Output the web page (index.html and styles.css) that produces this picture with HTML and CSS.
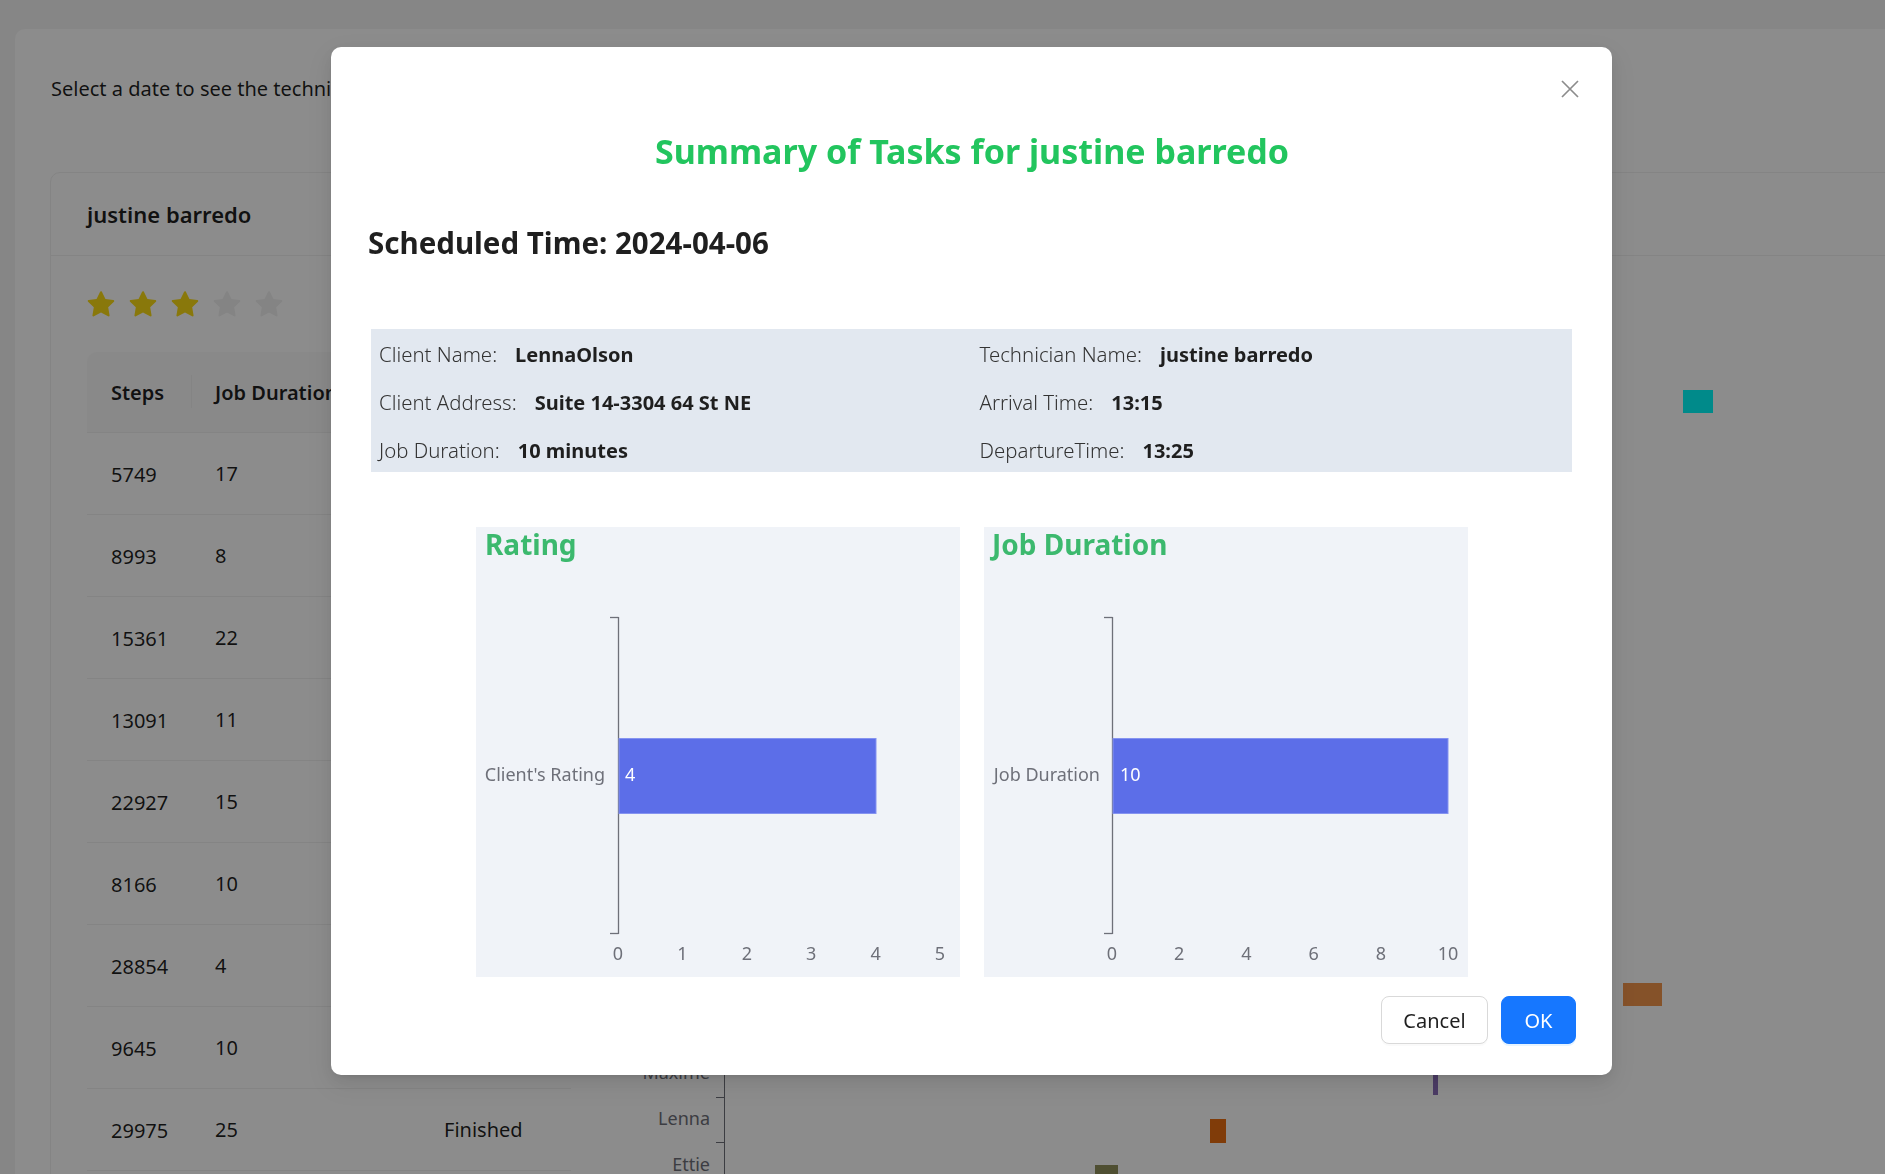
FILE: index.html
```html
<!DOCTYPE html>
<html lang="en">
<head>
<meta charset="utf-8">
<title>Technician Tasks</title>
<link rel="stylesheet" href="styles.css">
</head>
<body>
<div class="page">
  <div class="main-card">
    <p class="intro">Select a date to see the technician's tasks and performance.</p>
    <section class="tech-card">
      <header class="tech-head">justine barredo</header>
      <div class="tech-body">
        <div class="tech-left">
          <div class="stars">
            <svg class="star on" viewBox="64 64 896 896"><path d="M908.1 353.1l-253.9-36.9L540.7 86.1c-3.1-6.3-8.2-11.4-14.5-14.5-15.8-7.8-35-1.3-42.9 14.5L369.8 316.2l-253.9 36.9c-7 1-13.4 4.3-18.3 9.3a32.05 32.05 0 00.6 45.3l183.7 179.1-43.4 252.9a31.95 31.95 0 0046.4 33.7L512 754l227.1 119.4c6.2 3.3 13.4 4.4 20.3 3.2 17.4-3 29.1-19.5 26.1-36.9l-43.4-252.9 183.7-179.1c5-4.9 8.3-11.3 9.3-18.3 2.7-17.5-9.5-33.7-27-36.3z"/></svg>
            <svg class="star on" viewBox="64 64 896 896"><path d="M908.1 353.1l-253.9-36.9L540.7 86.1c-3.1-6.3-8.2-11.4-14.5-14.5-15.8-7.8-35-1.3-42.9 14.5L369.8 316.2l-253.9 36.9c-7 1-13.4 4.3-18.3 9.3a32.05 32.05 0 00.6 45.3l183.7 179.1-43.4 252.9a31.95 31.95 0 0046.4 33.7L512 754l227.1 119.4c6.2 3.3 13.4 4.4 20.3 3.2 17.4-3 29.1-19.5 26.1-36.9l-43.4-252.9 183.7-179.1c5-4.9 8.3-11.3 9.3-18.3 2.7-17.5-9.5-33.7-27-36.3z"/></svg>
            <svg class="star on" viewBox="64 64 896 896"><path d="M908.1 353.1l-253.9-36.9L540.7 86.1c-3.1-6.3-8.2-11.4-14.5-14.5-15.8-7.8-35-1.3-42.9 14.5L369.8 316.2l-253.9 36.9c-7 1-13.4 4.3-18.3 9.3a32.05 32.05 0 00.6 45.3l183.7 179.1-43.4 252.9a31.95 31.95 0 0046.4 33.7L512 754l227.1 119.4c6.2 3.3 13.4 4.4 20.3 3.2 17.4-3 29.1-19.5 26.1-36.9l-43.4-252.9 183.7-179.1c5-4.9 8.3-11.3 9.3-18.3 2.7-17.5-9.5-33.7-27-36.3z"/></svg>
            <svg class="star off" viewBox="64 64 896 896"><path d="M908.1 353.1l-253.9-36.9L540.7 86.1c-3.1-6.3-8.2-11.4-14.5-14.5-15.8-7.8-35-1.3-42.9 14.5L369.8 316.2l-253.9 36.9c-7 1-13.4 4.3-18.3 9.3a32.05 32.05 0 00.6 45.3l183.7 179.1-43.4 252.9a31.95 31.95 0 0046.4 33.7L512 754l227.1 119.4c6.2 3.3 13.4 4.4 20.3 3.2 17.4-3 29.1-19.5 26.1-36.9l-43.4-252.9 183.7-179.1c5-4.9 8.3-11.3 9.3-18.3 2.7-17.5-9.5-33.7-27-36.3z"/></svg>
            <svg class="star off" viewBox="64 64 896 896"><path d="M908.1 353.1l-253.9-36.9L540.7 86.1c-3.1-6.3-8.2-11.4-14.5-14.5-15.8-7.8-35-1.3-42.9 14.5L369.8 316.2l-253.9 36.9c-7 1-13.4 4.3-18.3 9.3a32.05 32.05 0 00.6 45.3l183.7 179.1-43.4 252.9a31.95 31.95 0 0046.4 33.7L512 754l227.1 119.4c6.2 3.3 13.4 4.4 20.3 3.2 17.4-3 29.1-19.5 26.1-36.9l-43.4-252.9 183.7-179.1c5-4.9 8.3-11.3 9.3-18.3 2.7-17.5-9.5-33.7-27-36.3z"/></svg>
          </div>
          <table class="steps-table">
            <colgroup><col class="w1"><col class="w2"><col class="w3"></colgroup>
            <thead>
              <tr><th class="c1">Steps</th><th class="c2">Job Duration</th><th class="c3"></th></tr>
            </thead>
            <tbody>
              <tr><td>5749</td><td>17</td><td></td></tr>
              <tr><td>8993</td><td>8</td><td></td></tr>
              <tr><td>15361</td><td>22</td><td></td></tr>
              <tr><td>13091</td><td>11</td><td></td></tr>
              <tr><td>22927</td><td>15</td><td></td></tr>
              <tr><td>8166</td><td>10</td><td></td></tr>
              <tr><td>28854</td><td>4</td><td></td></tr>
              <tr><td>9645</td><td>10</td><td></td></tr>
              <tr><td>29975</td><td>25</td><td>Finished</td></tr>
            </tbody>
          </table>
        </div>
        <div class="tech-chart">
          <div class="axis-v"></div>
          <div class="tick" style="top:749px"></div>
          <div class="tick" style="top:795px"></div>
          <div class="tick" style="top:841px"></div>
          <div class="tick" style="top:886px"></div>
          <div class="tick" style="top:932px"></div>
          <span class="cat" style="top:816px">Maxime</span>
          <span class="cat" style="top:862px">Lenna</span>
          <span class="cat" style="top:908px">Ettie</span>
          <div class="mark teal" style="left:1112px;top:134px;width:30px;height:23px"></div>
          <div class="mark orange" style="left:1052px;top:727px;width:39px;height:23px"></div>
          <div class="mark purple" style="left:862px;top:800px;width:5px;height:39px"></div>
          <div class="mark rust" style="left:639px;top:863px;width:16px;height:24px"></div>
          <div class="mark olive" style="left:524px;top:909px;width:23px;height:24px"></div>
        </div>
      </div>
    </section>
  </div>
</div>

<div class="mask"></div>

<div class="modal" role="dialog" aria-labelledby="modal-title">
  <button class="close" aria-label="Close">
    <svg viewBox="0 0 18 18" width="18" height="18"><path d="M1 1L17 17M17 1L1 17"/></svg>
  </button>
  <h2 class="modal-title" id="modal-title">Summary of Tasks for justine barredo</h2>
  <h3 class="sched">Scheduled Time: 2024-04-06</h3>
  <div class="info">
    <div><span class="lbl">Client Name:</span><span class="val">LennaOlson</span></div>
    <div><span class="lbl">Technician Name:</span><span class="val">justine barredo</span></div>
    <div><span class="lbl">Client Address:</span><span class="val">Suite 14-3304 64 St NE</span></div>
    <div><span class="lbl">Arrival Time:</span><span class="val">13:15</span></div>
    <div><span class="lbl">Job Duration:</span><span class="val">10 minutes</span></div>
    <div><span class="lbl">DepartureTime:</span><span class="val">13:25</span></div>
  </div>
  <div class="charts">
    <div class="panel">
      <div class="c-title rating-title">Rating</div>
      <svg class="chart" width="484" height="416" viewBox="0 34 484 416">
        <line class="axis" x1="142.5" y1="90" x2="142.5" y2="407"/>
        <line class="axis" x1="134" y1="90.5" x2="142.5" y2="90.5"/>
        <line class="axis" x1="134" y1="406.5" x2="142.5" y2="406.5"/>
        <rect class="bar" x="143" y="211.5" width="257" height="75"/>
        <text class="bar-label" x="149" y="247">4</text>
        <text class="cat-label" x="129" y="247">Client's Rating</text>
        <text class="x-label" x="142" y="426">0</text>
        <text class="x-label" x="206.4" y="426">1</text>
        <text class="x-label" x="270.8" y="426">2</text>
        <text class="x-label" x="335.2" y="426">3</text>
        <text class="x-label" x="399.6" y="426">4</text>
        <text class="x-label" x="464" y="426">5</text>
      </svg>
    </div>
    <div class="panel">
      <div class="c-title duration-title">Job Duration</div>
      <svg class="chart" width="484" height="416" viewBox="0 34 484 416">
        <line class="axis" x1="128.5" y1="90" x2="128.5" y2="407"/>
        <line class="axis" x1="120" y1="90.5" x2="128.5" y2="90.5"/>
        <line class="axis" x1="120" y1="406.5" x2="128.5" y2="406.5"/>
        <rect class="bar" x="129" y="211.5" width="335" height="75"/>
        <text class="bar-label" x="136" y="247">10</text>
        <text class="cat-label" x="116" y="247">Job Duration</text>
        <text class="x-label" x="128" y="426">0</text>
        <text class="x-label" x="195.2" y="426">2</text>
        <text class="x-label" x="262.4" y="426">4</text>
        <text class="x-label" x="329.6" y="426">6</text>
        <text class="x-label" x="396.8" y="426">8</text>
        <text class="x-label" x="464" y="426">10</text>
      </svg>
    </div>
  </div>
  <div class="footer">
    <button class="btn btn-cancel">Cancel</button>
    <button class="btn btn-ok">OK</button>
  </div>
</div>
</body>
</html>
```

FILE: styles.css
```css
* { box-sizing: border-box; }

html, body {
  margin: 0;
  height: 100%;
  overflow: hidden;
}

body {
  background: #f5f5f5;
  font-family: "Noto Sans", "Open Sans", sans-serif;
  color: rgba(0, 0, 0, 0.88);
}

/* ---------- background page ---------- */
.page {
  padding: 29px 0 0 15px;
}

.main-card {
  width: 2000px;
  height: 1300px;
  background: #fff;
  border-radius: 10px;
  padding: 45px 0 0 35px;
}

.intro {
  margin: 0 0 0 1px;
  font-size: 20px;
  line-height: 30px;
}

.tech-card {
  margin-top: 68px;
  width: 1900px;
  height: 1200px;
  border: 1px solid #f0f0f0;
  border-radius: 10px;
  background: #fff;
}

.tech-head {
  height: 83px;
  border-bottom: 1px solid #f0f0f0;
  padding-left: 36px;
  display: flex;
  align-items: center;
  font-size: 22px;
  font-weight: 600;
}

.tech-body {
  display: flex;
}

.tech-left {
  flex: none;
  width: 520px;
  padding: 35px 0 0 36px;
}

.stars {
  display: flex;
  gap: 14px;
  height: 28px;
}

.star {
  width: 28px;
  height: 28px;
}

.star.on { fill: #fadb14; }
.star.off { fill: #f0f0f0; }

.steps-table {
  margin-top: 33px;
  width: 484px;
  table-layout: fixed;
  border-collapse: separate;
  border-spacing: 0;
  font-size: 20px;
}

.steps-table .w1 { width: 104px; }
.steps-table .w2 { width: 229px; }
.steps-table .w3 { width: 151px; }

.steps-table th {
  height: 81px;
  padding: 0 24px;
  background: #fafafa;
  text-align: left;
  font-weight: 600;
  border-bottom: 1px solid #f0f0f0;
  position: relative;
}

.steps-table th.c1 { border-top-left-radius: 10px; }

.steps-table th.c2::before {
  content: "";
  position: absolute;
  left: 0;
  top: 23px;
  width: 1px;
  height: 33px;
  background: #f0f0f0;
}

.steps-table td {
  height: 82px;
  padding: 0 24px;
  border-bottom: 1px solid #f0f0f0;
}

.steps-table td:first-child { padding-top: 2px; }

.tech-chart {
  position: relative;
  flex: none;
  width: 1300px;
  height: 1000px;
}

.axis-v {
  position: absolute;
  left: 153px;
  top: 100px;
  width: 1px;
  height: 1000px;
  background: #6e7079;
}

.tick {
  position: absolute;
  left: 145px;
  width: 8px;
  height: 1px;
  background: #6e7079;
}

.cat {
  position: absolute;
  right: calc(100% - 139px);
  transform: translateY(-50%);
  font-size: 18px;
  color: #6e7079;
  white-space: nowrap;
}

.mark { position: absolute; }
.mark.teal { background: #00fcfc; }
.mark.orange { background: #f2954b; }
.mark.purple { background: #8a6db8; }
.mark.rust { background: #e96d12; }
.mark.olive { background: #91915b; }

/* ---------- modal ---------- */
.mask {
  position: fixed;
  inset: 0;
  background: rgba(0, 0, 0, 0.45);
}

.modal {
  position: fixed;
  top: 47px;
  left: 331px;
  width: 1281px;
  background: #fff;
  border-radius: 10px;
  padding: 81px 36px 31px 37px;
  box-shadow: 0 6px 16px 0 rgba(0, 0, 0, 0.08),
              0 3px 6px -4px rgba(0, 0, 0, 0.12),
              0 9px 28px 8px rgba(0, 0, 0, 0.05);
}

.close {
  position: absolute;
  top: 33px;
  right: 33px;
  width: 18px;
  height: 18px;
  padding: 0;
  border: 0;
  background: transparent;
}

.close svg {
  display: block;
  stroke: #8c8c8c;
  stroke-width: 1.7;
  fill: none;
}

.modal-title {
  margin: 0;
  text-align: center;
  font-size: 34px;
  line-height: 46px;
  font-weight: 700;
  color: #22c55e;
}

.sched {
  margin: 51px 0 0;
  font-size: 29.5px;
  line-height: 36px;
  font-weight: 700;
  color: #1f1f1f;
}

.info {
  margin: 68px 4px 0 3px;
  height: 143px;
  padding: 1px 8px 0;
  background: #e2e8f0;
  display: grid;
  grid-template-columns: 1fr 1fr;
  grid-template-rows: 48px 48px 48px;
  column-gap: 16px;
  align-items: center;
  font-size: 19.5px;
  color: #1f1f1f;
}

.info .lbl {
  font-size: 20.4px;
  font-weight: 300;
  color: #333;
  margin-right: 18px;
}

.info .val {
  font-size: 20px;
  font-weight: 700;
}

.charts {
  margin-top: 55px;
  display: flex;
  justify-content: center;
  gap: 24px;
}

.panel {
  width: 484px;
  height: 450px;
  background: #f0f3f8;
}

.c-title {
  height: 34px;
  font-size: 28px;
  line-height: 34px;
  font-weight: 700;
  color: #3cb96e;
  white-space: nowrap;
}

.rating-title { padding-left: 9px; }
.duration-title { padding-left: 8px; }

.chart {
  display: block;
  font-family: "Noto Sans", "Open Sans", sans-serif;
}

.axis {
  stroke: #6e7079;
  stroke-width: 1.3;
}

.bar {
  fill: #5c6ee8;
  stroke: #8593f0;
  stroke-width: 1;
}

.bar-label {
  font-size: 18px;
  fill: #fff;
  dominant-baseline: central;
}

.cat-label {
  font-size: 18px;
  fill: #6e7079;
  text-anchor: end;
  dominant-baseline: central;
}

.x-label {
  font-size: 18px;
  fill: #6e7079;
  text-anchor: middle;
  dominant-baseline: central;
}

.footer {
  margin-top: 19px;
  display: flex;
  justify-content: flex-end;
  gap: 13px;
}

.btn {
  height: 48px;
  border-radius: 8px;
  font-family: "Noto Sans", "Open Sans", sans-serif;
  font-size: 20px;
  padding: 0;
  cursor: pointer;
}

.btn-cancel {
  width: 107px;
  background: #fff;
  border: 1px solid #d9d9d9;
  color: rgba(0, 0, 0, 0.88);
  box-shadow: 0 2px 0 rgba(0, 0, 0, 0.02);
}

.btn-ok {
  width: 75px;
  background: #1677ff;
  border: 1px solid #1677ff;
  color: #fff;
  box-shadow: 0 2px 0 rgba(5, 145, 255, 0.1);
}
```
